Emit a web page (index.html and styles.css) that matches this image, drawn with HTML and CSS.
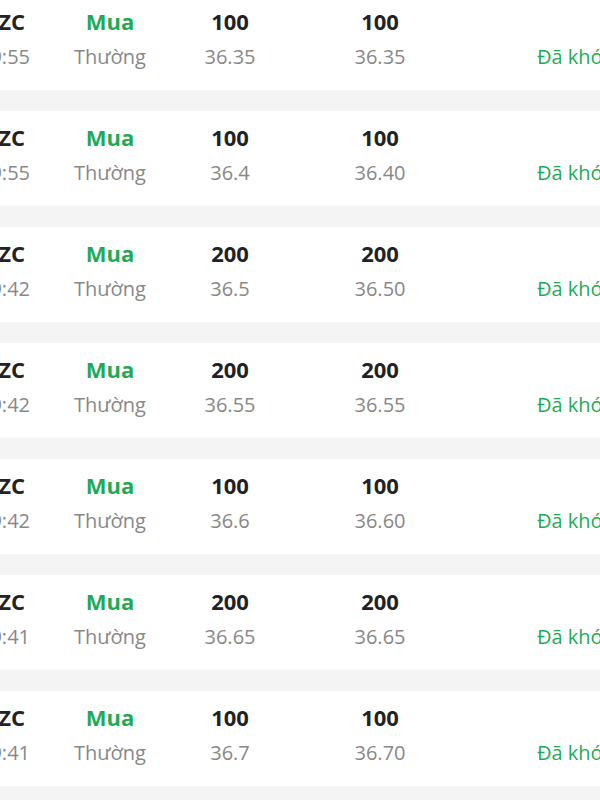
FILE: index.html
```html
<!DOCTYPE html>
<html lang="vi">
<head>
<meta charset="utf-8">
<link rel="stylesheet" href="styles.css">
</head>
<body>
<div class="list">
  <div class="row">
    <div class="c1"><span class="sym">ZC</span><span class="time">10:09:55</span></div>
    <div class="c2"><span class="side">Mua</span><span class="sub">Thường</span></div>
    <div class="c3"><span class="qty">100</span><span class="sub">36.35</span></div>
    <div class="c4"><span class="qty">100</span><span class="sub">36.35</span></div>
    <div class="c5"><span class="status">Đã khớp</span></div>
  </div>
  <div class="row">
    <div class="c1"><span class="sym">ZC</span><span class="time">10:09:55</span></div>
    <div class="c2"><span class="side">Mua</span><span class="sub">Thường</span></div>
    <div class="c3"><span class="qty">100</span><span class="sub">36.4</span></div>
    <div class="c4"><span class="qty">100</span><span class="sub">36.40</span></div>
    <div class="c5"><span class="status">Đã khớp</span></div>
  </div>
  <div class="row">
    <div class="c1"><span class="sym">ZC</span><span class="time">10:09:42</span></div>
    <div class="c2"><span class="side">Mua</span><span class="sub">Thường</span></div>
    <div class="c3"><span class="qty">200</span><span class="sub">36.5</span></div>
    <div class="c4"><span class="qty">200</span><span class="sub">36.50</span></div>
    <div class="c5"><span class="status">Đã khớp</span></div>
  </div>
  <div class="row">
    <div class="c1"><span class="sym">ZC</span><span class="time">10:09:42</span></div>
    <div class="c2"><span class="side">Mua</span><span class="sub">Thường</span></div>
    <div class="c3"><span class="qty">200</span><span class="sub">36.55</span></div>
    <div class="c4"><span class="qty">200</span><span class="sub">36.55</span></div>
    <div class="c5"><span class="status">Đã khớp</span></div>
  </div>
  <div class="row">
    <div class="c1"><span class="sym">ZC</span><span class="time">10:09:42</span></div>
    <div class="c2"><span class="side">Mua</span><span class="sub">Thường</span></div>
    <div class="c3"><span class="qty">100</span><span class="sub">36.6</span></div>
    <div class="c4"><span class="qty">100</span><span class="sub">36.60</span></div>
    <div class="c5"><span class="status">Đã khớp</span></div>
  </div>
  <div class="row">
    <div class="c1"><span class="sym">ZC</span><span class="time">10:09:41</span></div>
    <div class="c2"><span class="side">Mua</span><span class="sub">Thường</span></div>
    <div class="c3"><span class="qty">200</span><span class="sub">36.65</span></div>
    <div class="c4"><span class="qty">200</span><span class="sub">36.65</span></div>
    <div class="c5"><span class="status">Đã khớp</span></div>
  </div>
  <div class="row">
    <div class="c1"><span class="sym">ZC</span><span class="time">10:09:41</span></div>
    <div class="c2"><span class="side">Mua</span><span class="sub">Thường</span></div>
    <div class="c3"><span class="qty">100</span><span class="sub">36.7</span></div>
    <div class="c4"><span class="qty">100</span><span class="sub">36.70</span></div>
    <div class="c5"><span class="status">Đã khớp</span></div>
  </div>
</div>
</body>
</html>
```
FILE: styles.css
```css
html, body {
  margin: 0;
  padding: 0;
  background: #f4f4f4;
  font-family: "Open Sans", "Noto Sans", sans-serif;
  overflow: hidden;
}
.list {
  margin-top: -5px;
  display: flex;
  flex-direction: column;
  gap: 21px;
}
.row {
  background: #fff;
  height: 95px;
  box-sizing: border-box;
  padding-top: 8px;
  display: grid;
  grid-template-columns: 40px 140px 100px 200px 1fr;
}
.row > div {
  display: flex;
  flex-direction: column;
  line-height: 36px;
  white-space: nowrap;
}
.c1 { align-items: flex-end; padding-right: 10px; }
.c2, .c3, .c4 { align-items: center; }
.c5 { padding-left: 57px; justify-content: flex-end; height: 72px; }
.sym {
  font-weight: 700;
  font-size: 22px;
  color: #222;
  margin-right: 5px;
}
.time, .sub {
  font-size: 20px;
  color: #888;
}
.side {
  font-weight: 700;
  font-size: 22px;
  color: #1faa55;
}
.qty {
  font-weight: 700;
  font-size: 22px;
  color: #222;
}
.status {
  font-size: 20px;
  color: #1faa55;
}
```
